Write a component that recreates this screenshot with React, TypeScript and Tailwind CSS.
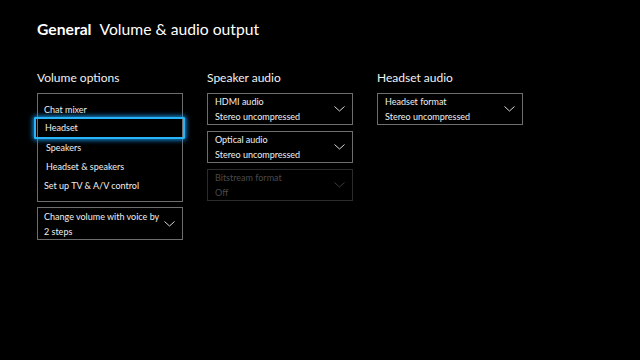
import React from "react";

const font = { fontFamily: "Lato, 'Open Sans', sans-serif" };

function Chevron({ dim = false }: { dim?: boolean }) {
  return (
    <svg width="11" height="6" viewBox="0 0 11 6" className="shrink-0">
      <path d="M0.5 0.5 L5.5 5 L10.5 0.5" fill="none" stroke={dim ? "#3a3a3a" : "#d8d8d8"} strokeWidth="1" />
    </svg>
  );
}

function Drop({ label, value, dim = false }: { label: string; value: string; dim?: boolean }) {
  return (
    <div
      className={`flex h-[32px] w-[146px] items-center justify-between border pl-[7px] pr-[7px] ${
        dim ? "border-[#2c2c2c]" : "border-[#6e6e6e]"
      }`}
    >
      <div className={`flex flex-col text-[9px] leading-[15px] ${dim ? "text-[#4a4a4a]" : "text-[#f0f0f0]"}`}>
        <span>{label}</span>
        <span>{value}</span>
      </div>
      <Chevron dim={dim} />
    </div>
  );
}

export default function App() {
  return (
    <div className="h-[360px] w-[640px] overflow-hidden bg-black text-white" style={font}>
      <div className="flex items-baseline gap-[8px] pl-[37px] pt-[19px] text-[15.7px] leading-[20px]">
        <span className="font-bold">General</span>
        <span>Volume &amp; audio output</span>
      </div>
      <div className="mt-[31px] flex gap-[24px] pl-[37px]">
        <div className="flex w-[146px] flex-col">
          <div className="h-[15px] text-[12px] leading-[15px] text-[#f2f2f2]">Volume options</div>
          <div className="mt-[8px] flex h-[109px] flex-col border border-[#6e6e6e] text-[9px] text-[#f0f0f0]">
            <div className="h-[23px] pl-[6px] pt-[9px] leading-[14px]">Chat mixer</div>
            <div className="-ml-[4px] -mr-[3px] flex h-[22px] items-center rounded-[1px] border-2 border-[#28b4f8] pl-[9px] shadow-[0_0_5px_1px_#1596e8]">
              Headset
            </div>
            <div className="flex h-[18px] items-center pl-[8px]">Speakers</div>
            <div className="flex h-[19px] items-center pl-[8px]">Headset &amp; speakers</div>
            <div className="flex h-[19px] items-center pl-[6px]">Set up TV &amp; A/V control</div>
          </div>
          <div className="mt-[5px] flex h-[33px] items-center justify-between border border-[#6e6e6e] pl-[6px] pr-[7px]">
            <div className="flex flex-col text-[9px] leading-[15px] text-[#f0f0f0]">
              <span>Change volume with voice by</span>
              <span>2 steps</span>
            </div>
            <Chevron />
          </div>
        </div>
        <div className="flex w-[146px] flex-col">
          <div className="h-[15px] text-[12px] leading-[15px] text-[#f2f2f2]">Speaker audio</div>
          <div className="mt-[8px] flex flex-col gap-[6px]">
            <Drop label="HDMI audio" value="Stereo uncompressed" />
            <Drop label="Optical audio" value="Stereo uncompressed" />
            <Drop label="Bitstream format" value="Off" dim />
          </div>
        </div>
        <div className="flex w-[146px] flex-col">
          <div className="h-[15px] text-[12px] leading-[15px] text-[#f2f2f2]">Headset audio</div>
          <div className="mt-[8px]">
            <Drop label="Headset format" value="Stereo uncompressed" />
          </div>
        </div>
      </div>
    </div>
  );
}
